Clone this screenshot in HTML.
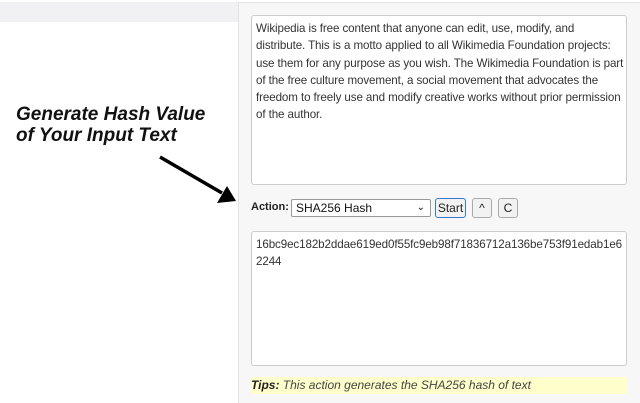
<!DOCTYPE html>
<html><head><style>
body{margin:0;width:640px;height:400px;background:#fff;position:relative;overflow:hidden;font-family:"Liberation Sans",Arial,sans-serif;}
.band{position:absolute;left:0;top:2px;width:239px;height:20px;background:#f1f1f3;}
.panel{position:absolute;left:238px;top:2px;width:410px;height:400px;background:#f7f7f7;border-left:1px solid #e2e2e2;border-top:1px solid #e2e2e2;}
.ta{position:absolute;left:251px;width:376px;background:#fff;border:1px solid #ccc;border-radius:3px;font-size:11.6px;color:#333;line-height:17.3px;padding:4px 4px;box-sizing:border-box;white-space:nowrap;overflow:hidden;}
.h{position:absolute;left:16px;font-weight:bold;font-style:italic;font-size:19px;color:#111;}
.btn{position:absolute;top:198px;height:20px;border:1px solid #aaa;border-radius:3px;background:#f2f2f2;font-size:12px;text-align:center;line-height:18px;box-sizing:border-box;color:#222;}
</style></head><body>
<div class="band"></div>
<div class="panel"></div>
<div class="ta" style="top:15px;height:170px;letter-spacing:-0.1px;">Wikipedia is free content that anyone can edit, use, modify, and<br>distribute. This is a motto applied to all Wikimedia Foundation projects:<br>use them for any purpose as you wish. The Wikimedia Foundation is part<br>of the free culture movement, a social movement that advocates the<br>freedom to freely use and modify creative works without prior permission<br>of the author.</div>
<div class="h" style="top:104px;">Generate Hash Value</div>
<div class="h" style="top:125px;">of Your Input Text</div>
<svg style="position:absolute;left:0;top:0" width="640" height="400"><line x1="160" y1="157" x2="222" y2="193" stroke="#000" stroke-width="3.5"/><polygon points="236,201 217,203 227,186" fill="#000"/></svg>
<div style="position:absolute;left:251px;top:201px;font-size:11px;font-weight:bold;color:#222;white-space:nowrap;">Action:</div>
<div style="position:absolute;left:291px;top:199px;width:140px;height:18px;border:1px solid #999;border-radius:2px;background:#fff;box-sizing:border-box;font-size:12px;line-height:16px;padding-left:4px;color:#111;">SHA256 Hash<span style="position:absolute;right:5px;top:0;font-size:10px;">&#8964;</span></div>
<div class="btn" style="left:435px;width:31px;border:1px solid #3a78c9;">Start</div>
<div class="btn" style="left:472px;width:20px;">^</div>
<div class="btn" style="left:498px;width:20px;">C</div>
<div class="ta" style="top:231px;height:135px;letter-spacing:-0.1px;">16bc9ec182b2ddae619ed0f55fc9eb98f71836712a136be753f91edab1e6<br>2244</div>
<div style="position:absolute;left:251px;top:377px;width:376px;height:17px;background:#ffffcc;font-size:12px;font-style:italic;color:#444;line-height:17px;"><b style="color:#222">Tips:</b> This action generates the SHA256 hash of text</div>
</body></html>
